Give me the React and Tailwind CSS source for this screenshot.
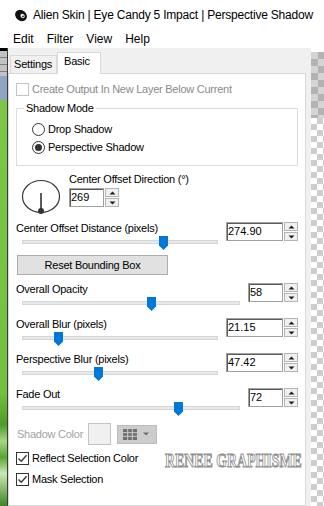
import React from "react";

function Thumb({ left }) {
  return (
    <svg
      className="absolute top-0"
      style={{ left }}
      width="9"
      height="14"
      viewBox="0 0 9 14"
    >
      <polygon points="0,0 9,0 9,9.5 4.5,14 0,9.5" fill="#0078d7" />
    </svg>
  );
}

function Arrow({ up }) {
  return (
    <svg width="7" height="4" viewBox="0 0 7 4">
      {up ? (
        <polygon points="0.5,3.5 6.5,3.5 3.5,0.5" fill="#1f1f1f" />
      ) : (
        <polygon points="0.5,0.5 6.5,0.5 3.5,3.5" fill="#1f1f1f" />
      )}
    </svg>
  );
}

function Spin({ value, wide, className = "" }) {
  return (
    <div className={`flex h-[19px] ${className}`}>
      <div
        className={`${
          wide ? "w-[57px]" : "w-[35px]"
        } border border-[#a0a0a0] bg-white pl-px text-[11px] leading-[15px] shadow-[inset_1px_1px_0_#5a5a5a] pt-px`}
      >
        {value}
      </div>
      <div className="ml-px flex w-[14px] flex-col">
        <div className="flex h-[9px] items-center justify-center border border-[#b4b4b4] bg-[#f0f0f0]">
          <Arrow up />
        </div>
        <div className="mt-px flex h-[9px] items-center justify-center border border-[#b4b4b4] bg-[#f0f0f0]">
          <Arrow />
        </div>
      </div>
    </div>
  );
}

function SliderRow({ label, value, wide, thumb, className = "" }) {
  return (
    <div className={`flex items-start ${className}`}>
      <div className="flex flex-1 flex-col">
        <div className="h-[14px] leading-[14px] tracking-[-0.25px]">{label}</div>
        <div className="relative ml-[6px] mr-[8px] mt-px h-[14px]">
          <div className="absolute inset-x-0 top-[4px] h-[4px] border border-[#d6d6d6] bg-[#e7eaea]" />
          <Thumb left={thumb} />
        </div>
      </div>
      <Spin value={value} wide={wide} className="mt-px" />
    </div>
  );
}

function Check({ checked, disabled }) {
  return (
    <div
      className={`flex h-[13px] w-[13px] items-center justify-center border bg-white ${
        disabled ? "border-[#c4c4c4]" : "border-[#333333]"
      }`}
    >
      {checked && (
        <svg width="11" height="11" viewBox="0 0 11 11">
          <path d="M1.5 5.5 L4.2 8.3 L9.6 2.2" fill="none" stroke="#333" strokeWidth="1.3" />
        </svg>
      )}
    </div>
  );
}

function Radio({ checked }) {
  return (
    <div className="flex h-[13px] w-[13px] items-center justify-center rounded-full border border-[#333333] bg-white">
      {checked && <div className="h-[7px] w-[7px] rounded-full bg-[#333333]" />}
    </div>
  );
}

export default function App() {
  return (
    <div className="relative flex h-[506px] w-[324px] flex-col overflow-hidden bg-white font-['Liberation_Sans',Arial,sans-serif] text-[11px] text-black">
      {/* title bar */}
      <div className="flex h-[30px] items-center pl-[14px] text-[12px] tracking-[-0.2px]">
        <svg width="14" height="15" viewBox="0 0 14 15">
          <ellipse cx="7" cy="7.5" rx="6.3" ry="5.2" transform="rotate(40 7 7.5)" fill="#111" />
          <ellipse cx="8.6" cy="8" rx="2.3" ry="1.9" transform="rotate(40 8.6 8)" fill="#fff" />
          <circle cx="9" cy="8.4" r="0.9" fill="#111" />
        </svg>
        <span className="ml-[5px] whitespace-nowrap">
          Alien Skin | Eye Candy 5 Impact | Perspective Shadow
        </span>
      </div>

      {/* menu */}
      <div className="flex h-[18px] items-center gap-[13px] pl-[13px] text-[12px]">
        <span>Edit</span>
        <span>Filter</span>
        <span>View</span>
        <span>Help</span>
      </div>

      <div className="flex min-h-0 flex-1">
        {/* window behind, left edge */}
        <div className="flex w-[8px] flex-col border-r border-[#3b3b3b]">
          <div className="h-[3px] bg-black" />
          <div className="h-[25px] bg-[#c2c2c2] bg-[image:repeating-linear-gradient(to_bottom,#c2c2c2_0_6px,#7d7d7d_6px_7px)]" />
          <div className="h-[24px] bg-[#8ea6c2]" />
          <div className="flex-1 bg-[image:linear-gradient(to_bottom,#7cc746_0%,#72c13e_72%,#4f9a2a_80%,#a5d884_84%,#5aa532_88%,#c9eab4_92%,#3e8424_100%)]" />
        </div>

        {/* dialog */}
        <div className="flex w-[303px] flex-col bg-[#f0f0f0] pt-[4px]">
          <div className="flex h-[21px] items-end">
            <div className="ml-[2px] h-[18px] w-[47px] border border-b-0 border-[#d9d9d9] pl-[3px] leading-[16px] tracking-[-0.2px]">
              Settings
            </div>
            <div className="relative z-10 -mb-px h-[22px] w-[44px] border border-b-0 border-[#d9d9d9] bg-white pl-[6px] leading-[17px] tracking-[-0.2px]">
              Basic
            </div>
          </div>

          <div className="flex w-[298px] flex-1 flex-col border border-[#d9d9d9] bg-white px-[7px] pt-[9px]">
            <div className="flex h-[13px] items-center">
              <Check disabled />
              <span className="ml-[3px] tracking-[-0.25px] text-[#8a8a8a]">
                Create Output In New Layer Below Current
              </span>
            </div>

            <div className="relative mt-[12px] h-[58px] border border-[#dcdcdc] pl-[15px] pt-[14px]">
              <span className="absolute -top-[8px] left-[7px] bg-white px-[2px] leading-[14px] tracking-[-0.25px]">
                Shadow Mode
              </span>
              <div className="flex h-[13px] items-center">
                <Radio />
                <span className="ml-[3px] tracking-[-0.25px]">Drop Shadow</span>
              </div>
              <div className="mt-[5px] flex h-[13px] items-center">
                <Radio checked />
                <span className="ml-[3px] tracking-[-0.25px]">Perspective Shadow</span>
              </div>
            </div>

            <div className="mt-[6px] flex items-start">
              <svg className="ml-[5px] mt-[6px]" width="40" height="36" viewBox="0 0 40 36">
                <ellipse cx="20" cy="18.5" rx="18.5" ry="16" fill="none" stroke="#333" strokeWidth="1.2" />
                <line x1="20" y1="15" x2="20" y2="33" stroke="#333" strokeWidth="1.6" />
                <circle cx="20" cy="33" r="3" fill="#333" />
              </svg>
              <div className="ml-[8px] flex flex-col">
                <div className="h-[14px] leading-[14px] tracking-[-0.25px]">
                  Center Offset Direction (°)
                </div>
                <Spin value="269" className="mt-[2px]" />
              </div>
            </div>

            <SliderRow className="mt-[7px]" label="Center Offset Distance (pixels)" value="274.90" wide thumb={136.5} />

            <div className="ml-px mt-[5px] flex h-[20px] w-[151px] items-center justify-center border border-[#adadad] bg-[#e1e1e1] tracking-[-0.25px]">
              Reset Bounding Box
            </div>

            <SliderRow className="mt-[7px]" label="Overall Opacity" value="58" thumb={124.5} />
            <SliderRow className="mt-[6px]" label="Overall Blur (pixels)" value="21.15" wide thumb={31.5} />
            <SliderRow className="mt-[6px]" label="Perspective Blur (pixels)" value="47.42" wide thumb={71.5} />
            <SliderRow className="mt-[6px]" label="Fade Out" value="72" thumb={151.5} />

            <div className="mt-[7px] flex h-[22px] items-center">
              <span className="w-[72px] pl-px tracking-[-0.25px] text-[#a3a3a3]">Shadow Color</span>
              <div className="h-[22px] w-[23px] border border-[#c4c4c4] bg-[#f0f0f0]" />
              <div className="ml-[6px] flex h-[19px] w-[40px] items-center border border-[#bdbdbd] bg-[#cccccc] pl-[5px]">
                <svg width="14" height="11" viewBox="0 0 14 11">
                  <rect x="0" y="0" width="14" height="11" fill="#6f6f6f" />
                  <line x1="4.7" y1="0" x2="4.7" y2="11" stroke="#cccccc" strokeWidth="1" />
                  <line x1="9.3" y1="0" x2="9.3" y2="11" stroke="#cccccc" strokeWidth="1" />
                  <line x1="0" y1="3.7" x2="14" y2="3.7" stroke="#cccccc" strokeWidth="1" />
                  <line x1="0" y1="7.3" x2="14" y2="7.3" stroke="#cccccc" strokeWidth="1" />
                </svg>
                <svg className="ml-[6px]" width="6" height="4" viewBox="0 0 6 4">
                  <polygon points="0,0.5 6,0.5 3,3.5" fill="#6f6f6f" />
                </svg>
              </div>
            </div>

            <div className="mt-[7px] flex h-[13px] items-center">
              <Check checked />
              <span className="ml-[3px] tracking-[-0.25px]">Reflect Selection Color</span>
            </div>
            <div className="mt-[8px] flex h-[13px] items-center">
              <Check checked />
              <span className="ml-[3px] tracking-[-0.25px]">Mask Selection</span>
            </div>
          </div>
        </div>

        {/* transparency preview at the right */}
        <div className="flex w-[13px] flex-col pt-[4px]">
          <div className="h-[66px] bg-[image:conic-gradient(#b3b3b3_25%,#d4d4d4_0_50%,#b3b3b3_0_75%,#d4d4d4_0)] bg-[length:14px_14px]" />
          <div className="flex-1 bg-[image:conic-gradient(#cdcdcd_25%,#ffffff_0_50%,#cdcdcd_0_75%,#ffffff_0)] bg-[length:12px_12px]" />
        </div>
      </div>

      {/* watermark */}
      <div className="absolute left-[165px] top-[451px] origin-left scale-x-[0.73] whitespace-nowrap font-['Liberation_Serif',serif] text-[19px] font-bold leading-[19px] text-white [-webkit-text-stroke:1px_#8c8c8c]">
        RENEE GRAPHISME
      </div>
    </div>
  );
}
